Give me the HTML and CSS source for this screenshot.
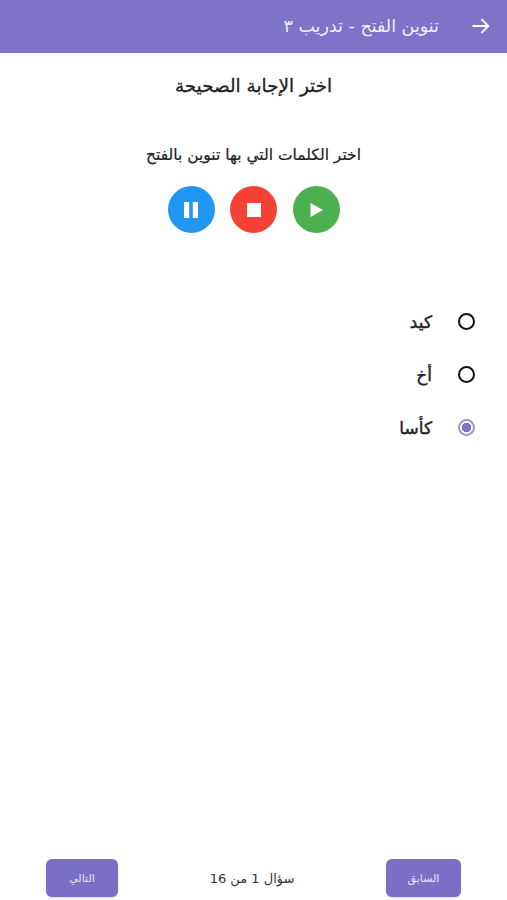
FILE: index.html
```html
<!DOCTYPE html>
<html lang="ar" dir="rtl">
<head>
  <meta charset="UTF-8">
  <title>تنوين الفتح - تدريب ٣</title>
  <meta name="viewport" content="width=device-width, initial-scale=1">
  <link rel="stylesheet" href="styles.css">
</head>
<body>

<div class="screen">

  <header class="appbar">
    <button class="back-btn" aria-label="رجوع">
      <svg viewBox="0 0 24 24" width="22" height="22" fill="none" stroke="currentColor" stroke-width="2" stroke-linecap="round" stroke-linejoin="round">
        <path d="M3.500 12h16.500M13 5l7 7-7 7"/>
      </svg>
    </button>
    <h1 class="appbar-title">تنوين الفتح - تدريب ٣</h1>
  </header>

  <main class="quiz">
    <h2 class="quiz-heading">اختر الإجابة الصحيحة</h2>
    <p class="question">اختر الكلمات التي بها تنوين بالفتح</p>

    <div class="audio-controls">
      <button class="audio-btn play" aria-label="تشغيل">
        <svg viewBox="0 0 24 24" width="24" height="24"><path d="M6.500 5v14l12.500-7z" fill="#fff"/></svg>
      </button>
      <button class="audio-btn stop" aria-label="إيقاف">
        <svg viewBox="0 0 24 24" width="24" height="24"><path d="M5 5h14v14h-14z" fill="#fff"/></svg>
      </button>
      <button class="audio-btn pause" aria-label="إيقاف مؤقت">
        <svg viewBox="0 0 24 24" width="24" height="24"><path d="M5 4h5.200v16h-5.200zM13.800 4h5.200v16h-5.200z" fill="#fff"/></svg>
      </button>
    </div>

    <div class="options" role="radiogroup">
      <div class="option"><span class="radio"></span><span class="option-label">كيد</span></div>
      <div class="option"><span class="radio"></span><span class="option-label">أخ</span></div>
      <div class="option"><span class="radio checked"></span><span class="option-label">كأسا</span></div>
    </div>
  </main>

  <footer class="pager">
    <button class="pager-btn prev">السابق</button>
    <span class="pager-count">سؤال 1 من 16</span>
    <button class="pager-btn next">التالي</button>
  </footer>

</div>

</body>
</html>
```

FILE: styles.css
```css
:root {
  --primary: #7f72c9;
  --button: #7a6ec6;
  --text: #222;
}

* { box-sizing: border-box; }

body {
  margin: 0;
  background: #fff;
  color: var(--text);
  font-family: "DejaVu Sans", "Noto Sans", sans-serif;
}

.screen {
  min-height: 900px;
  display: flex;
  flex-direction: column;
}

.appbar {
  height: 53px;
  padding: 0 15px 2px 0;
  display: flex;
  align-items: center;
  gap: 31px;
  background: var(--primary);
  color: #fff;
}

.back-btn {
  padding: 0;
  display: flex;
  background: transparent;
  border: none;
  color: #fff;
}

.appbar-title {
  margin: 0;
  font-size: 17.500px;
  font-weight: 400;
  color: #f1eefa;
}

.quiz {
  flex: 1;
  display: flex;
  flex-direction: column;
  align-items: center;
}

.quiz-heading {
  margin: 22px 0 0;
  font-size: 18.400px;
  line-height: 22px;
  font-weight: 400;
  -webkit-text-stroke: 0.3px var(--text);
}

.question {
  margin: 48px 0 0;
  font-size: 15.500px;
  line-height: 20px;
  -webkit-text-stroke: 0.2px var(--text);
}

.audio-controls {
  margin-top: 21px;
  display: flex;
  gap: 15.500px;
}

.audio-btn {
  width: 47px;
  height: 47px;
  padding: 0;
  display: flex;
  align-items: center;
  justify-content: center;
  border: none;
  border-radius: 50%;
}

.audio-btn.play { background: #4caf50; }
.audio-btn.stop { background: #f44336; }
.audio-btn.pause { background: #2196f3; }

.options {
  width: 100%;
  margin-top: 75px;
  padding-right: 32.500px;
  display: flex;
  flex-direction: column;
  gap: 26px;
}

.option {
  height: 27px;
  display: flex;
  align-items: center;
  gap: 25.500px;
}

.radio {
  width: 17px;
  height: 17px;
  border: 2px solid #111;
  border-radius: 50%;
}

.radio.checked {
  border-color: #9d93d8;
  background: radial-gradient(circle, var(--primary) 0 4.500px, transparent 5px);
}

.option-label {
  font-size: 17px;
  -webkit-text-stroke: 0.4px var(--text);
}

.pager {
  padding: 0 46px 3px;
  display: flex;
  align-items: center;
  justify-content: space-between;
}

.pager-btn {
  height: 38px;
  padding: 0;
  background: var(--button);
  border: none;
  border-radius: 6px;
  box-shadow: 0 1px 2px rgba(0,0,0,0.15);
  color: #e8e4f6;
  font-family: inherit;
  font-size: 11px;
}

.pager-btn.prev { width: 75px; }
.pager-btn.next { width: 72px; }

.pager-count {
  font-size: 13px;
  color: #333;
}
```
